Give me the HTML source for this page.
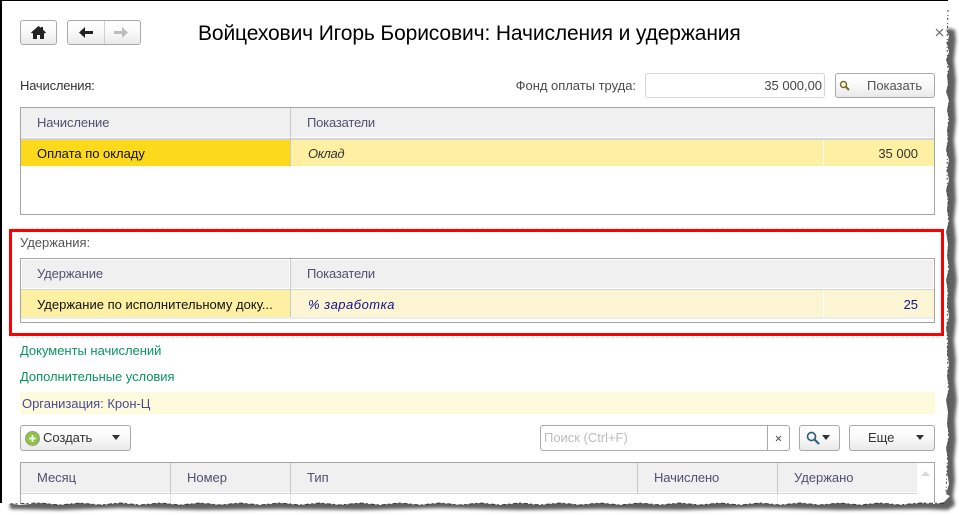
<!DOCTYPE html>
<html lang="ru">
<head>
<meta charset="utf-8">
<title>Начисления и удержания</title>
<style>
html,body{margin:0;padding:0;background:#fff}
body{width:959px;height:515px;overflow:hidden;position:relative;font:13px "Liberation Sans",Arial,sans-serif;color:#4b4b4b}
.a{position:absolute}
.t{position:absolute;white-space:nowrap;line-height:16px;height:16px;letter-spacing:-.02px}
.btn{position:absolute;box-sizing:border-box;border:1px solid #a9a9a9;border-radius:3px;background:linear-gradient(#fff,#fafafa 45%,#e9e9e9)}
.grid{position:absolute;box-sizing:border-box;left:20px;width:915px;border:1px solid #a5a5a5;background:#fff}
.h{position:absolute;background:#f0f0f0;box-sizing:border-box}
.v{position:absolute;width:1px;background:#c9c9c9}
.w{position:absolute;width:1px;background:#fff}
.hd{color:#50506e}
</style>
</head>
<body>
<svg class="a" style="left:0;top:0" width="959" height="515">
<defs><filter id="b" x="-5%" y="-5%" width="110%" height="110%"><feGaussianBlur stdDeviation="1.700"/></filter></defs>
<path filter="url(#b)" fill="#606060" d="M10 509L60 510 120 508 200 510 280 509 360 510 440 508 520 510 600 509 680 510 760 508 840 510 925 509 948 510 955 505 953 496 955 480 954 460 956 440 955 420 957 400 955 380 956 360 954 340 956 320 955 300 957 280 955 260 956 240 954 220 956 200 955 180 956 160 954 140 956 120 955 100 956 80 954 60 956 40 955 30 948 28 940 40 940 498 10 498Z"/>
<path fill="#fff" d="M2 1H948L947 8 949 12 946 16 948 24 946 30 949 36 947 44 949 52 946 60 949 68 947 76 948 84 946 92 949 100 947 110 949 120 947 130 948 140 946 150 949 160 947 170 949 180 946 190 948 200 947 210 949 220 946 232 948 244 947 256 949 268 946 280 948 292 947 304 949 316 946 328 948 340 947 352 949 364 947 376 949 388 946 400 948 412 947 424 949 436 946 448 948 460 947 472 949 484 946 494 950 496 944 502 936 504 920 503 900 505 880 503 860 505 840 503 820 505 800 503 780 505 760 503 740 505 720 503 700 505 680 503 660 505 640 503 620 505 600 503 580 505 560 503 540 505 520 503 500 505 480 503 460 505 440 503 420 505 400 503 380 505 360 503 340 505 320 503 300 505 280 503 260 505 240 503 220 505 200 503 180 505 160 503 140 505 120 503 100 505 80 503 60 505 40 503 20 505 2 503Z"/>
<path fill="none" stroke="#444" stroke-width="1" stroke-dasharray="2 3 1 2" d="M948 10L947 44 949 100 947 170 949 240 947 330 949 420 946 494"/>
<path fill="none" stroke="#3a3a3a" stroke-width="1" stroke-dasharray="4 3 2 2" d="M944 503.500L920 503 900 505 880 503 860 505 840 503 820 505 800 503 780 505 760 503 740 505 720 503 700 505 680 503 660 505 640 503 620 505 600 503 580 505 560 503 540 505 520 503 500 505 480 503 460 505 440 503 420 505 400 503 380 505 360 503 340 505 320 503 300 505 280 503 260 505 240 503 220 505 200 503 180 505 160 503 140 505 120 503 100 505 80 503 60 505 40 503 10 504"/>
<rect x="0" y="0" width="948" height="1" fill="#000"/>
<rect x="0" y="0" width="2" height="503" fill="#000"/>
<path fill="none" stroke="#e2e2e2" stroke-dasharray="3 2" d="M11 228.500H942M11 337.500H942"/>
</svg>

<!-- top bar -->
<div class="btn" style="left:20px;top:20px;width:37px;height:25px"></div>
<svg class="a" style="left:31px;top:26px" width="15" height="13"><path fill="#222" d="M7.500 0L0 6.500 1 7.500 2 7V13H6V9H9V13H13V7L14 7.500 15 6.500 12 3.800V1H10V2Z"/></svg>
<div class="btn" style="left:67px;top:20px;width:74px;height:25px"></div>
<div class="a" style="left:104px;top:21px;width:1px;height:23px;background:#cfcfcf"></div>
<svg class="a" style="left:79px;top:26px" width="15" height="13"><path fill="#222" d="M0 6.500L6 1V5H14V8H6V12Z"/></svg>
<svg class="a" style="left:114px;top:26px" width="15" height="13"><path fill="#bdbdbd" d="M14 6.500L8 1V5H0V8H8V12Z"/></svg>
<div class="t" style="left:198px;top:21px;height:26px;line-height:26px;font-size:21px;color:#000;letter-spacing:-.12px">Войцехович Игорь Борисович: Начисления и удержания</div>
<svg class="a" style="left:935px;top:28px" width="9" height="9"><path d="M1 1L8 8M8 1L1 8" stroke="#666" stroke-width="1.200"/></svg>

<!-- accruals -->
<div class="t" style="left:20px;top:78px;color:#333;letter-spacing:-.2px">Начисления:</div>
<div class="t" style="right:323px;top:78px">Фонд оплаты труда:</div>
<div class="a" style="left:645px;top:73px;width:178px;height:23px;border:1px solid #d6d6d6;border-radius:3px;background:#fff"></div>
<div class="t" style="right:137px;top:78px;color:#444">35 000,00</div>
<div class="btn" style="left:835px;top:73px;width:100px;height:25px"></div>
<svg class="a" style="left:839px;top:80px" width="12" height="12"><circle cx="4.500" cy="4.500" r="3" fill="none" stroke="#7d6a1e" stroke-width="1.500"/><path d="M7 7L10 10" stroke="#7d6a1e" stroke-width="2"/></svg>
<div class="t" style="left:867px;top:78px;color:#555">Показать</div>

<div class="grid" style="top:107px;height:108px">
  <div class="h" style="left:0;top:0;width:269px;height:29px"></div>
  <div class="h" style="left:270px;top:0;width:643px;height:29px"></div>
  <div class="a" style="left:0;top:30px;width:913px;height:2px;background:#d4d4d4"></div>
  <div class="a" style="left:0;top:32px;width:269px;height:26px;background:#fdd91c"></div>
  <div class="a" style="left:270px;top:32px;width:643px;height:26px;background:#fdf0a3"></div>
  <div class="v" style="left:269px;top:0;height:58px"></div>
  <div class="w" style="left:802px;top:32px;height:26px"></div>
</div>
<div class="t hd" style="left:37px;top:115px;letter-spacing:-.1px">Начисление</div>
<div class="t hd" style="left:307px;top:115px;letter-spacing:-.2px">Показатели</div>
<div class="t" style="left:37px;top:146px;color:#111">Оплата по окладу</div>
<div class="t" style="left:308px;top:146px;font-style:italic;color:#333;letter-spacing:-.35px">Оклад</div>
<div class="t" style="right:41px;top:146px;color:#333">35 000</div>

<!-- deductions -->
<div class="a" style="left:9px;top:229px;width:929px;height:101px;border:3px solid #f00"></div>
<div class="t" style="left:20px;top:235px;color:#555">Удержания:</div>
<div class="grid" style="top:258px;height:65px">
  <div class="h" style="left:1px;top:1px;width:267px;height:28px"></div>
  <div class="h" style="left:270px;top:1px;width:642px;height:28px"></div>
  <div class="a" style="left:0;top:30px;width:913px;height:1px;background:#d4d4d4"></div>
  <div class="a" style="left:0;top:31px;width:269px;height:27px;background:#fdf0a3"></div>
  <div class="a" style="left:270px;top:31px;width:643px;height:27px;background:#fcf5d3"></div>
  <div class="a" style="left:0;top:58px;width:913px;height:2px;background:#ececec"></div>
  <div class="v" style="left:269px;top:0;height:58px"></div>
  <div class="w" style="left:802px;top:31px;height:27px"></div>
</div>
<div class="t hd" style="left:37px;top:266px;letter-spacing:-.1px">Удержание</div>
<div class="t hd" style="left:307px;top:266px;letter-spacing:-.2px">Показатели</div>
<div class="t" style="left:37px;top:297px;color:#111;letter-spacing:.01px">Удержание по исполнительному доку...</div>
<div class="t" style="left:308px;top:297px;font-style:italic;color:#11118a;letter-spacing:.5px">% заработка</div>
<div class="t" style="right:41px;top:297px;color:#11118a">25</div>

<!-- links -->
<div class="t" style="left:20px;top:343px;color:#0a9560">Документы начислений</div>
<div class="t" style="left:20px;top:369px;color:#0a9560;letter-spacing:-.05px">Дополнительные условия</div>
<div class="a" style="left:20px;top:392px;width:915px;height:22px;background:#fefbdc"></div>
<div class="t" style="left:22px;top:396px;color:#4a4a96">Организация: Крон-Ц</div>

<!-- toolbar -->
<div class="btn" style="left:20px;top:425px;width:111px;height:26px"></div>
<svg class="a" style="left:25px;top:431px" width="15" height="15"><circle cx="7.500" cy="7.500" r="7" fill="#8cc63f" stroke="#9a9a9a"/><path d="M7.500 4V11M4 7.500H11" stroke="#fff" stroke-width="1.800"/></svg>
<div class="t" style="left:43px;top:430px;color:#333">Создать</div>
<svg class="a" style="left:111px;top:435px" width="10" height="6"><path fill="#333" d="M1 0H9L5 5Z"/></svg>
<div class="a" style="left:540px;top:425px;width:248px;height:24px;border:1px solid #a9a9a9;border-radius:3px;background:#fff"></div>
<div class="a" style="left:767px;top:426px;width:1px;height:24px;background:#a9a9a9"></div>
<div class="t" style="left:544px;top:430px;color:#bcbcbc">Поиск (Ctrl+F)</div>
<svg class="a" style="left:775px;top:435px" width="7" height="7"><path d="M1 1L6 6M6 1L1 6" stroke="#555"/></svg>
<div class="btn" style="left:799px;top:425px;width:41px;height:26px"></div>
<svg class="a" style="left:806px;top:431px" width="14" height="14"><circle cx="5.500" cy="5.500" r="4" fill="none" stroke="#2c6185" stroke-width="1.700"/><path d="M8.500 8.500L13 13" stroke="#2c6185" stroke-width="2.200"/></svg>
<svg class="a" style="left:821px;top:435px" width="10" height="6"><path fill="#333" d="M1 0H9L5 5Z"/></svg>
<div class="btn" style="left:849px;top:425px;width:86px;height:26px"></div>
<div class="t" style="left:868px;top:430px;color:#333">Еще</div>
<svg class="a" style="left:915px;top:435px" width="10" height="6"><path fill="#333" d="M1 0H9L5 5Z"/></svg>

<!-- bottom grid -->
<div class="a" style="left:20px;top:462px;width:915px;height:1px;background:#a5a5a5"></div>
<div class="a" style="left:20px;top:462px;width:1px;height:41px;background:#a5a5a5"></div>
<div class="a" style="left:934px;top:462px;width:1px;height:41px;background:#a5a5a5"></div>
<div class="h" style="left:21px;top:463px;width:896px;height:29px"></div>
<div class="a" style="left:21px;top:493px;width:896px;height:1px;background:#d4d4d4"></div>
<div class="v" style="left:170px;top:463px;height:30px"></div>
<div class="v" style="left:290px;top:463px;height:30px"></div>
<div class="v" style="left:637px;top:463px;height:30px"></div>
<div class="v" style="left:777px;top:463px;height:30px"></div>
<div class="v" style="left:170px;top:494px;height:9px;background:#e6e6e6"></div>
<div class="v" style="left:290px;top:494px;height:9px;background:#e6e6e6"></div>
<div class="v" style="left:777px;top:494px;height:9px;background:#e6e6e6"></div>
<svg class="a" style="left:921px;top:471px" width="9" height="5"><path fill="#d8d8d8" d="M0 5L4.500 0 9 5Z"/></svg>
<div class="t hd" style="left:37px;top:470px">Месяц</div>
<div class="t hd" style="left:187px;top:470px">Номер</div>
<div class="t hd" style="left:307px;top:470px">Тип</div>
<div class="t hd" style="left:654px;top:470px;letter-spacing:-.1px">Начислено</div>
<div class="t hd" style="left:794px;top:470px">Удержано</div>
</body>
</html>
